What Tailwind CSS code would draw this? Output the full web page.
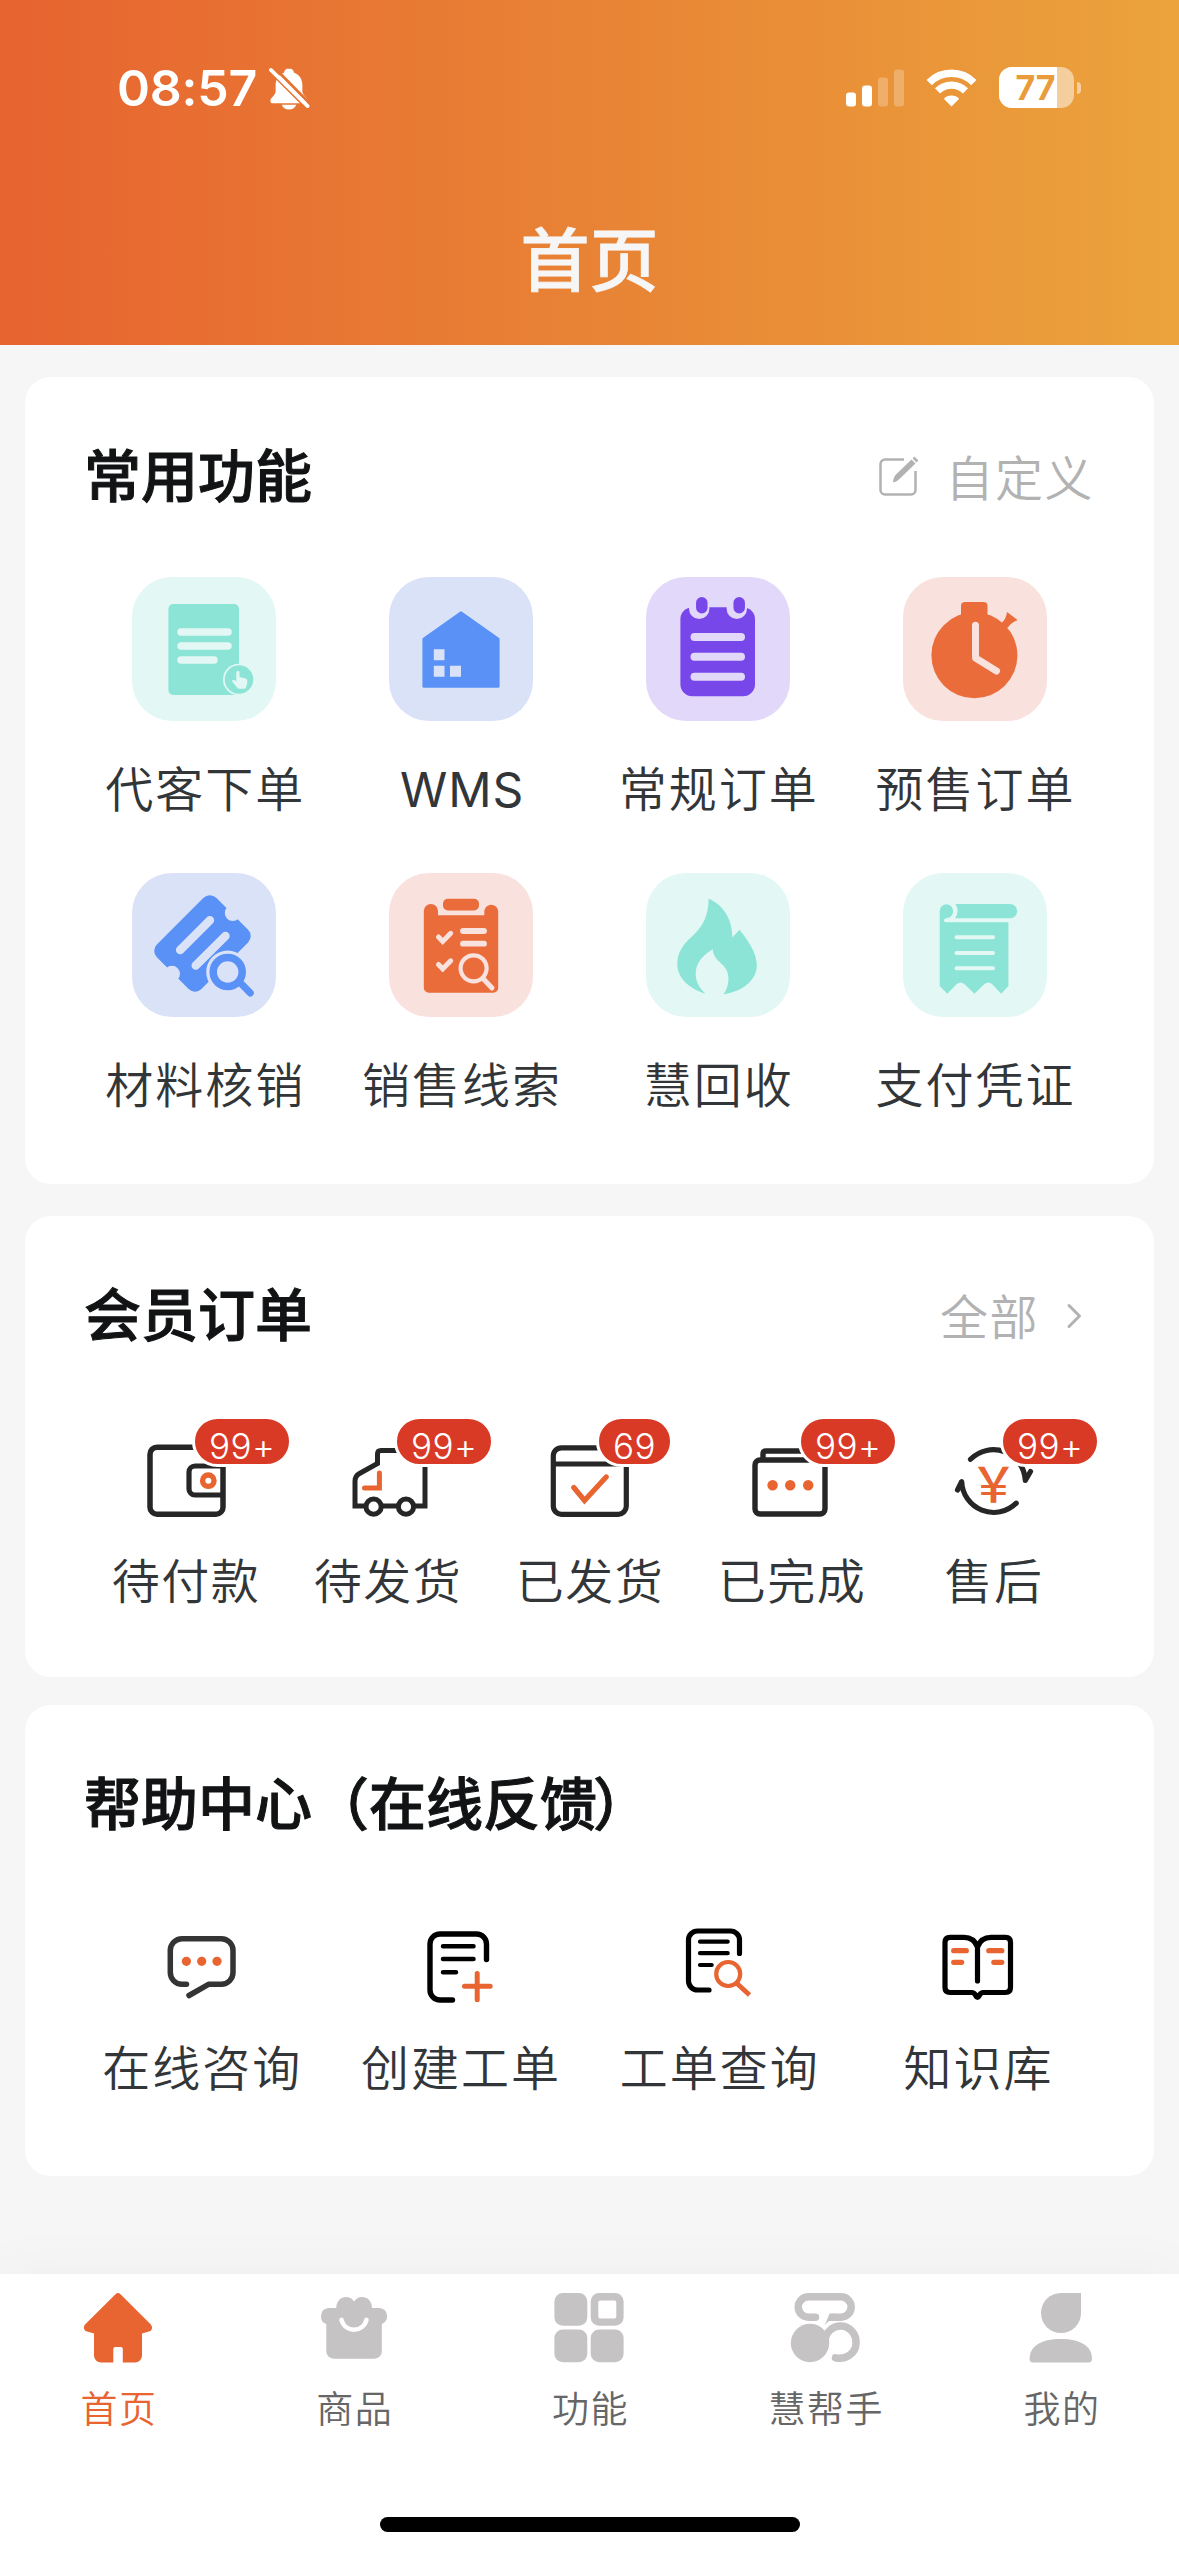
<!DOCTYPE html>
<html lang="zh-CN">
<head>
<meta charset="utf-8">
<title>首页</title>
<script src="https://cdn.jsdelivr.net/npm/@tailwindcss/browser@4"></script>
</head>
<body class="w-[1179px] h-[2556px] overflow-hidden bg-[#f6f6f6] font-['Noto_Sans_CJK_SC',sans-serif] text-[#333638]">
<div class="flex flex-col w-[1179px] h-[2556px]">

  <!-- Header -->
  <header class="h-[345px] shrink-0 bg-linear-to-r from-[#e76330] via-[#e88335] to-[#eba33c] flex flex-col">
    <div class="flex items-center justify-between pl-[117px] pr-[98px] pt-[63px] h-[112px] text-white">
      <div class="flex items-center gap-[11px]">
        <span class="font-['Inter',sans-serif] font-semibold text-[50px] leading-[50px] tracking-[-0.2px]">08:57</span>
        <svg width="42" height="46" viewBox="0 0 44 46" fill="none">
          <path d="M22 2.500c-3.200 0-5.200 2-5.200 4.600-6 2-8.800 6.900-8.800 13.400v6c0 4.500-5.500 6.500-5.500 10 0 1.700 1 2.500 2.700 2.500h33.600c1.700 0 2.700-.8 2.700-2.500 0-3.500-5.500-5.500-5.500-10v-6c0-6.500-2.800-11.400-8.800-13.400 0-2.600-2-4.600-5.200-4.600Z" fill="#fff"/>
          <path d="M14.500 40.500h15c-.8 3.300-3.800 5-7.500 5s-6.700-1.700-7.500-5Z" fill="#fff"/>
          <path d="M1 4.500 42 45.500M5 0 44 39.500" stroke="#e77332" stroke-width="3"/>
          <path d="M3 4 41.500 42" stroke="#fff" stroke-width="3.800" stroke-linecap="round"/>
        </svg>
      </div>
      <div class="flex items-center">
        <svg width="58" height="38" viewBox="0 0 58 38" fill="#fff">
          <rect x="0" y="23.500" width="10" height="14" rx="3"/>
          <rect x="16" y="16.500" width="10" height="21" rx="3"/>
          <rect x="32" y="8.500" width="10" height="29" rx="3" fill-opacity=".25"/>
          <rect x="48" y="0.500" width="10" height="37" rx="3" fill-opacity=".25"/>
        </svg>
        <svg class="ml-[22px]" width="51" height="38" viewBox="0 0 51 38" fill="none" stroke="#fff">
          <path d="M3.200 13.600a31.500 31.500 0 0 1 44.600 0" stroke-width="7.500"/>
          <path d="M11.500 21.900a19.800 19.800 0 0 1 28 0" stroke-width="7.200"/>
          <path d="M25.500 37.500 17.800 29.700a10.900 10.900 0 0 1 15.400 0Z" fill="#fff" stroke="none"/>
        </svg>
        <div class="ml-[22px] relative w-[75px] h-[41px] rounded-[13px] overflow-hidden bg-white/50 flex items-center">
          <div class="w-[58px] h-full bg-white"></div>
          <span class="absolute inset-x-0 left-[-2px] text-center font-['Inter',sans-serif] font-bold text-[34px] leading-[41px] text-[#ea9c3a]">77</span>
        </div>
        <div class="ml-[3px] w-[4px] h-[12px] rounded-r-full bg-white/50"></div>
      </div>
    </div>
    <h1 class="pt-[110px] text-center font-medium text-[69px] leading-[69px] text-[#f6f6f6] h-[233px] [-webkit-text-stroke:0.8px_#f6f6f6]">首页</h1>
  </header>

  <!-- Common functions -->
  <section class="mx-[25px] mt-[32px] h-[807px] shrink-0 bg-white rounded-[26px] flex flex-col">
    <div class="flex items-center justify-between pl-[59px] pr-[60px] pt-[68px] h-[128px]">
      <h2 class="font-medium text-[57px] leading-[57px] mt-[-6px] text-[#111314] [-webkit-text-stroke:1px_#111314]">常用功能</h2>
      <div class="flex items-center gap-[25px] text-[#b2b2b2]">
        <svg class="mt-[2px]" width="42" height="42" viewBox="0 0 42 42" fill="none" stroke="#b2b2b2" stroke-width="2.500">
          <path d="M26 4.500H7A4.500 4.500 0 0 0 2.500 9v26A4.500 4.500 0 0 0 7 39.500h26a4.500 4.500 0 0 0 4.500-4.500V16"/>
          <path d="M15 27.500c.2-3.500.8-5.500 3-8L33.500 4.500l4 4L22 23.500c-2 2-3.500 3-7 4Z" fill="#b2b2b2" stroke="none"/>
          <path d="m35.500 2.500 4 4"/>
        </svg>
        <span class="font-[350] text-[48px] leading-[48px] tracking-[1.500px]">自定义</span>
      </div>
    </div>
    <div class="grid grid-cols-4 ml-[51px] w-[1027px] pt-[72px] font-[350] text-[48px] leading-[48px] tracking-[2px] text-center">
      <div class="flex flex-col items-center h-[296px]">
        <svg width="144" height="144" viewBox="0 0 144 144">
          <rect width="144" height="144" rx="40" fill="#e3f8f5"/>
          <rect x="36.400" y="27" width="70.600" height="91" rx="5" fill="#8be4d5"/>
          <path d="M49 55h47M49 69h47M49 83h33" stroke="#e3f8f5" stroke-width="7.500" stroke-linecap="round"/>
          <circle cx="106.800" cy="102.500" r="15.800" fill="#e3f8f5"/>
          <circle cx="107" cy="102.500" r="14.300" fill="#8be4d5"/>
          <path d="M104.300 96c0-2.600 3.200-2.600 3.200 0v4l5.500 1.300c1.500.4 2.300 1.300 2.300 2.900 0 3.200-.8 5.400-2.300 7.600h-6.500c-2-2-4.500-5-6.600-7.800.6-1.400 2.600-1.200 4.400.5Z" fill="#e3f8f5"/>
        </svg>
        <span class="mt-[41px] pl-[2px]">代客下单</span>
      </div>
      <div class="flex flex-col items-center h-[296px]">
        <svg width="144" height="144" viewBox="0 0 144 144">
          <rect width="144" height="144" rx="40" fill="#dae2f8"/>
          <path d="M72 35.500 109.500 62v47.600H34.500V62Z" fill="#5991f7" stroke="#5991f7" stroke-width="2.200" stroke-linejoin="round"/>
          <path d="M44.800 72.300h10.700v11H44.800ZM44.800 88.700h10.700v11H44.800ZM61 88.700h11v11H61Z" fill="#dae2f8"/>
        </svg>
        <span class="mt-[45px] pl-[2px] font-['Inter',sans-serif] font-normal tracking-[1px]">WMS</span>
      </div>
      <div class="flex flex-col items-center h-[296px]">
        <svg width="144" height="144" viewBox="0 0 144 144">
          <rect width="144" height="144" rx="40" fill="#e2d8fa"/>
          <rect x="34.400" y="30.300" width="74.600" height="89" rx="12" fill="#7847ea"/>
          <path d="M53.200 21v10.700M90.800 21v10.700" stroke="#e2d8fa" stroke-width="20.400" stroke-linecap="round"/>
          <path d="M55.800 25.700v5M93.200 25.700v5" stroke="#7847ea" stroke-width="11.500" stroke-linecap="round"/>
          <path d="M48.500 60h46.500M48.500 79.800h46.500M48.500 99.700h46.500" stroke="#e2d8fa" stroke-width="8" stroke-linecap="round"/>
        </svg>
        <span class="mt-[41px] pl-[2px]">常规订单</span>
      </div>
      <div class="flex flex-col items-center h-[296px]">
        <svg width="144" height="144" viewBox="0 0 144 144">
          <rect width="144" height="144" rx="40" fill="#f9e1dd"/>
          <circle cx="71.400" cy="78.300" r="43" fill="#ea6c3b"/>
          <rect x="58" y="25" width="26.500" height="20" rx="4" fill="#ea6c3b"/>
          <path d="M104 35 114.600 43Q108 45.500 104.700 50.700L99 50l-1.500-3Q103.500 42 104 35Z" fill="#ea6c3b"/>
          <path d="M72.500 48.300V81L93.500 94" stroke="#f9e1dd" stroke-width="7" fill="none" stroke-linecap="round" stroke-linejoin="round"/>
        </svg>
        <span class="mt-[41px] pl-[2px]">预售订单</span>
      </div>
      <div class="flex flex-col items-center">
        <svg width="144" height="144" viewBox="0 0 144 144">
          <rect width="144" height="144" rx="40" fill="#dae2f8"/>
          <g transform="rotate(-45 70.400 70.400)">
            <rect x="28.400" y="39" width="84" height="63" rx="9" fill="#5991f7"/>
            <circle cx="27.400" cy="70.400" r="8" fill="#dae2f8"/>
            <circle cx="113.400" cy="70.400" r="8" fill="#dae2f8"/>
            <path d="M50 59.400h42M50 81.400h42" stroke="#dae2f8" stroke-width="8.500" stroke-linecap="round"/>
          </g>
          <circle cx="95.700" cy="99" r="21.500" fill="#dae2f8"/>
          <circle cx="95.700" cy="99" r="14.500" fill="none" stroke="#5991f7" stroke-width="7.500"/>
          <path d="M108 109.500 118.300 120" stroke="#5991f7" stroke-width="7" stroke-linecap="round"/>
        </svg>
        <span class="mt-[41px] pl-[2px]">材料核销</span>
      </div>
      <div class="flex flex-col items-center">
        <svg width="144" height="144" viewBox="0 0 144 144">
          <rect width="144" height="144" rx="40" fill="#f9e1dd"/>
          <path d="M34.800 38a7.100 7.100 0 0 1 14.200 0v4.300h46.300V38a7 7 0 0 1 13.900 0v76.700a5 5 0 0 1-5 5H39.800a5 5 0 0 1-5-5Z" fill="#ea6c3b"/>
          <rect x="54" y="25.700" width="36" height="11.800" rx="5" fill="#ea6c3b"/>
          <g fill="none" stroke="#f9e1dd" stroke-linecap="round">
            <path d="m49.500 64 4.200 4.500 8-8.200M49.500 91.500l4.200 4.500 8-8.200" stroke-width="5"/>
            <path d="M74 58h21M74 70.700h21" stroke-width="5.800"/>
            <circle cx="84.600" cy="95.300" r="13" stroke-width="4.200"/>
            <path d="m94 105.500 9 9.500" stroke-width="5"/>
          </g>
        </svg>
        <span class="mt-[41px] pl-[2px]">销售线索</span>
      </div>
      <div class="flex flex-col items-center">
        <svg width="144" height="144" viewBox="0 0 144 144">
          <rect width="144" height="144" rx="40" fill="#e3f8f5"/>
          <path d="M62.600 25.700C76 31 86.500 45 86.300 64.500L93.600 56.700C103 69 110.800 80 110.800 92.500 110.800 108 95 119 77.500 121.300 81 116 82.500 111 82.500 105.700 82.500 90 67.500 90 66.800 76.300 57 82 49.700 90 49.700 101 49.700 108 53 115 59.600 120.700 43 115.500 31.300 105 31.300 90.700 31.300 81 36 72 46 63.500 57.500 53 62.500 42 62.600 25.700Z" fill="#8be4d5"/>
        </svg>
        <span class="mt-[41px] pl-[2px]">慧回收</span>
      </div>
      <div class="flex flex-col items-center">
        <svg width="144" height="144" viewBox="0 0 144 144">
          <rect width="144" height="144" rx="40" fill="#e3f8f5"/>
          <path d="M36.700 38a6.700 6.700 0 0 1 13.400 0c0 4-3 7-6.500 7.300-3.500.5-3.500 4 0 4h61.800V113l-7.200 7.700-9.200-9.800q-3.800-3-7.600 0l-10 9.800-10-9.800q-3.800-3-7.600 0l-9.500 9.800-7.600-7.700Z" fill="#8be4d5"/>
          <path d="M52.500 31h55.300a7.200 7.200 0 0 1 0 14.300H52Q57 38 52.500 31Z" fill="#8be4d5"/>
          <path d="M53.500 64.300h36.500M53.500 80h36.500M53.500 95.300h36.500" stroke="#e3f8f5" stroke-width="4" stroke-linecap="round"/>
        </svg>
        <span class="mt-[41px] pl-[2px]">支付凭证</span>
      </div>
    </div>
  </section>

  <!-- Member orders -->
  <section class="mx-[25px] mt-[32px] h-[461px] shrink-0 bg-white rounded-[26px] flex flex-col">
    <div class="flex items-center justify-between pl-[59px] pr-[72px] pt-[68px] h-[128px]">
      <h2 class="font-medium text-[57px] leading-[57px] mt-[-6px] text-[#111314] [-webkit-text-stroke:1px_#111314]">会员订单</h2>
      <div class="flex items-center gap-[27px] text-[#b2b2b2]">
        <span class="font-[350] text-[48px] leading-[48px] tracking-[1.500px]">全部</span>
        <svg class="mt-[4px]" width="16" height="26" viewBox="0 0 16 26" fill="none" stroke="#b2b2b2" stroke-width="3" stroke-linecap="round" stroke-linejoin="round"><path d="M3 2.500 13.500 13 3 23.500"/></svg>
      </div>
    </div>
    <div class="grid grid-cols-5 ml-[60px] w-[1010px] pt-[91px] font-[350] text-[48px] leading-[48px] tracking-[1.500px]">
      <div class="relative flex flex-col items-center">
        <svg width="90" height="90" viewBox="0 0 90 90" fill="none" stroke="#262626" stroke-width="5.200">
          <rect x="9" y="12.200" width="73" height="67" rx="7" stroke-width="5.500"/>
          <path d="M82 31H54a6 6 0 0 0-6 6v17a6 6 0 0 0 6 6h28"/>
          <circle cx="67.300" cy="45.700" r="5.700" stroke="#e86430" stroke-width="5.400"/>
        </svg>
        <span class="mt-[29px]">待付款</span>
        <span class="absolute top-[-19px] left-[107px] h-[51px] px-[14px] rounded-full border-[3px] border-white bg-[#d93a26] text-white font-['Inter',sans-serif] font-light text-[35px] leading-[54px] tracking-[0.500px]">99+</span>
      </div>
      <div class="relative flex flex-col items-center">
        <svg width="90" height="90" viewBox="0 0 90 90" fill="none" stroke="#262626" stroke-width="5">
          <path d="M12 71V46q0-5 4.500-7.500L34.500 28.500V19q0-3.500 3.500-3.500H82V71Z"/>
          <circle cx="30.600" cy="71.700" r="7.600" fill="#fff"/>
          <circle cx="63" cy="71.700" r="7.600" fill="#fff"/>
          <path d="M36.400 38v15H21.500" stroke="#e86430" stroke-width="5" stroke-linecap="round"/>
        </svg>
        <span class="mt-[29px]">待发货</span>
        <span class="absolute top-[-19px] left-[107px] h-[51px] px-[14px] rounded-full border-[3px] border-white bg-[#d93a26] text-white font-['Inter',sans-serif] font-light text-[35px] leading-[54px] tracking-[0.500px]">99+</span>
      </div>
      <div class="relative flex flex-col items-center">
        <svg width="90" height="90" viewBox="0 0 90 90" fill="none" stroke="#262626" stroke-width="5.200">
          <rect x="8.300" y="12.800" width="73" height="66.500" rx="8"/>
          <path d="M8.300 29h73"/>
          <path d="M28.800 52.500 39.500 65.500 61.200 42" stroke="#e86430" stroke-linecap="round"/>
        </svg>
        <span class="mt-[29px]">已发货</span>
        <span class="absolute top-[-19px] left-[107px] h-[51px] px-[14px] rounded-full border-[3px] border-white bg-[#d93a26] text-white font-['Inter',sans-serif] font-light text-[35px] leading-[54px] tracking-[0.500px]">69</span>
      </div>
      <div class="relative flex flex-col items-center">
        <svg width="90" height="90" viewBox="0 0 90 90" fill="none" stroke="#262626" stroke-width="5.400">
          <rect x="8" y="25" width="70" height="54" rx="5"/>
          <path d="M16 25v-6q0-3 3-3h50q3 0 3 3v6"/>
          <g fill="#e86430" stroke="none"><circle cx="25.600" cy="50.300" r="5.200"/><circle cx="43.200" cy="50.300" r="5.200"/><circle cx="61.200" cy="50.300" r="5.200"/></g>
        </svg>
        <span class="mt-[29px]">已完成</span>
        <span class="absolute top-[-19px] left-[107px] h-[51px] px-[14px] rounded-full border-[3px] border-white bg-[#d93a26] text-white font-['Inter',sans-serif] font-light text-[35px] leading-[54px] tracking-[0.500px]">99+</span>
      </div>
      <div class="relative flex flex-col items-center">
        <svg width="90" height="90" viewBox="0 0 90 90" fill="none" stroke="#262626" stroke-width="5.200" stroke-linecap="round" stroke-linejoin="round">
          <path d="M67.200 68.200A32 32 0 0 1 12.700 46.500L8.500 55"/>
          <path d="M21.500 24.300A32 32 0 0 1 76.300 45.500L81.500 36.500"/>
          <text x="44.400" y="66.500" text-anchor="middle" font-family="Noto Sans CJK SC" font-weight="500" font-size="48" letter-spacing="0" fill="#e86430" stroke="none">￥</text>
        </svg>
        <span class="mt-[29px]">售后</span>
        <span class="absolute top-[-19px] left-[107px] h-[51px] px-[14px] rounded-full border-[3px] border-white bg-[#d93a26] text-white font-['Inter',sans-serif] font-light text-[35px] leading-[54px] tracking-[0.500px]">99+</span>
      </div>
    </div>
  </section>

  <!-- Help center -->
  <section class="mx-[25px] mt-[28px] h-[471px] shrink-0 bg-white rounded-[26px] flex flex-col">
    <div class="flex items-center pl-[59px] pt-[68px] h-[128px]">
      <h2 class="font-medium text-[57px] leading-[57px] mt-[-5px] text-[#111314] [-webkit-text-stroke:1px_#111314]">帮助中心（在线反馈<span class="-ml-[4px]">）</span></h2>
    </div>
    <div class="grid grid-cols-4 ml-[47px] w-[1035px] pt-[87px] font-[350] text-[48px] leading-[48px] tracking-[2px]">
      <div class="flex flex-col items-center">
        <svg width="90" height="90" viewBox="0 0 90 90" fill="none" stroke="#343434" stroke-width="5.500" stroke-linecap="round" stroke-linejoin="round">
          <path d="M30.500 64.300H26A11.700 11.700 0 0 1 14.300 52.600V30.400A11.700 11.700 0 0 1 26 18.700H65.300A11.700 11.700 0 0 1 77 30.400V52.600A11.700 11.700 0 0 1 65.300 64.300H52.500L33 75.500"/>
          <g fill="#e86430" stroke="none"><circle cx="30.400" cy="41.300" r="4.600"/><circle cx="45.700" cy="41.300" r="4.600"/><circle cx="61" cy="41.300" r="4.600"/></g>
        </svg>
        <span class="mt-[31px] pl-[2px]">在线咨询</span>
      </div>
      <div class="flex flex-col items-center">
        <svg width="90" height="90" viewBox="0 0 90 90" fill="none" stroke="#000" stroke-width="5.400" stroke-linecap="round">
          <path d="M71.500 39.500V24A10 10 0 0 0 61.500 14H25A10 10 0 0 0 15 24V70A10 10 0 0 0 25 80H37.500"/>
          <path d="M28 26.300H58.500M28 39H58.500M28 52.300H41" stroke-width="4.500"/>
          <path d="M49.500 66.300H75.200M62.200 53.500V79.700" stroke="#e86430" stroke-width="5"/>
        </svg>
        <span class="mt-[31px] pl-[2px]">创建工单</span>
      </div>
      <div class="flex flex-col items-center">
        <svg width="90" height="90" viewBox="0 0 90 90" fill="none" stroke="#000" stroke-width="5.200" stroke-linecap="round">
          <path d="M65.500 33.500V20A9 9 0 0 0 56.500 11H23.500A9 9 0 0 0 14.500 20V61A9 9 0 0 0 23.500 70H35"/>
          <path d="M26 21.700H53.700M26 33.200H53.700M26 45H37.700" stroke-width="4.200"/>
          <g stroke="#e86430"><circle cx="54.200" cy="54" r="12" stroke-width="4.200"/><path d="m63 63.500 12.500 11.500" stroke-width="4.800" stroke-linecap="butt"/></g>
        </svg>
        <span class="mt-[31px] pl-[2px]">工单查询</span>
      </div>
      <div class="flex flex-col items-center">
        <svg width="90" height="90" viewBox="0 0 90 90" fill="none" stroke="#000" stroke-width="5.200" stroke-linecap="round" stroke-linejoin="round">
          <path d="M44.500 61V27Q41 17.300 31 17.300H17Q12 17.300 12 22.300V67.500Q12 72.500 17 72.500H38.500Q41.500 72.500 43 76Q44.500 79 46 76Q47.500 72.500 50.500 72.500H72.500Q77.500 72.500 77.500 67.500V22.300Q77.500 17.300 72.500 17.300H58Q48 17.300 44.500 27"/>
          <path d="M20.700 30.700H33.300M20.700 42.300H28.700M55.800 30.700H68.800M60.800 42.300H68.800" stroke="#e86430"/>
        </svg>
        <span class="mt-[31px] pl-[2px]">知识库</span>
      </div>
    </div>
  </section>

  <!-- Tab bar -->
  <nav class="mt-auto h-[282px] shrink-0 bg-white shadow-[0_0_60px_rgba(0,0,0,0.04)] flex flex-col items-center">
    <div class="grid grid-cols-5 w-full pt-[18px] font-[350] text-[37px] leading-[37px] tracking-[1.500px] text-[#666]">
      <div class="flex flex-col items-center text-[#e86430]">
        <svg width="72" height="72" viewBox="0 0 72 72" fill="#e86430">
          <path d="M33.500 2.200Q36 0 38.500 2.200L68.800 32.500Q71.500 36 68.500 39L60 41.500V63.500a7 7 0 0 1-7 7H40.800V57q0-2-2-2H33.300q-2 0-2 2V70.500H19a7 7 0 0 1-7-7V41.500L3.500 39Q.5 36 3 32.500Z"/>
        </svg>
        <span class="mt-[25px] pl-[2px]">首页</span>
      </div>
      <div class="flex flex-col items-center">
        <svg width="72" height="72" viewBox="0 0 72 72" fill="#c5c3c4">
          <path d="M18.300 16C18.300 4.500 31 1.500 36.100 9.500 41.200 1.500 54 4.500 54 16H61.500A8.300 8.300 0 0 1 63.800 32V59.500A7.200 7.200 0 0 1 56.600 66.700H15.500A7.200 7.200 0 0 1 8.300 59.500V32A8.300 8.300 0 0 1 10.500 16Z"/>
          <path d="M23.500 27.800C27 41 45 41 48.500 27.800" fill="none" stroke="#fff" stroke-width="4.500" stroke-linecap="round"/>
        </svg>
        <span class="mt-[25px] pl-[2px]">商品</span>
      </div>
      <div class="flex flex-col items-center">
        <svg width="72" height="72" viewBox="0 0 72 72" fill="#c5c3c4">
          <rect x="1.400" y="1" width="32.900" height="32.800" rx="8.500"/>
          <rect x="37.700" y="1" width="32.900" height="32.800" rx="8.500"/>
          <rect x="1.400" y="37.400" width="32.900" height="32.800" rx="8.500"/>
          <rect x="37.700" y="37.400" width="32.900" height="32.800" rx="8.500"/>
          <rect x="45.300" y="8.600" width="18" height="18" rx="2" fill="#fff"/>
        </svg>
        <span class="mt-[25px] pl-[2px]">功能</span>
      </div>
      <div class="flex flex-col items-center">
        <svg width="72" height="72" viewBox="0 0 72 72" fill="none" stroke="#c5c3c4" stroke-width="7.500" stroke-linecap="round">
          <path d="M26.500 25.200H19.400A10.200 10.200 0 0 1 19.400 4.800H52A10.200 10.200 0 0 1 52 25.200H45"/>
          <path d="M40.500 21.500H46V29H40Q37.500 31 35.500 33.500 38 28 40.500 21.500Z" fill="#c5c3c4" stroke="none"/>
          <circle cx="21" cy="51" r="19.200" fill="#c5c3c4" stroke="none"/>
          <path d="M46.500 65.800C56 67.800 67 62 67 51A15.400 15.800 0 0 0 36 49"/>
        </svg>
        <span class="mt-[25px] pl-[2px]">慧帮手</span>
      </div>
      <div class="flex flex-col items-center">
        <svg width="72" height="72" viewBox="0 0 72 72" fill="#c5c3c4">
          <path d="M36 1H56V21A20 20 0 1 1 36 1Z"/>
          <path d="M4.600 67C4.600 54 16 47 35.800 47S67 54 67 67Q67 70.400 63.500 70.400H8Q4.600 70.400 4.600 67Z"/>
        </svg>
        <span class="mt-[25px] pl-[2px]">我的</span>
      </div>
    </div>
    <div class="mt-[91px] w-[420px] h-[15px] rounded-full bg-black"></div>
  </nav>
</div>
</body>
</html>
